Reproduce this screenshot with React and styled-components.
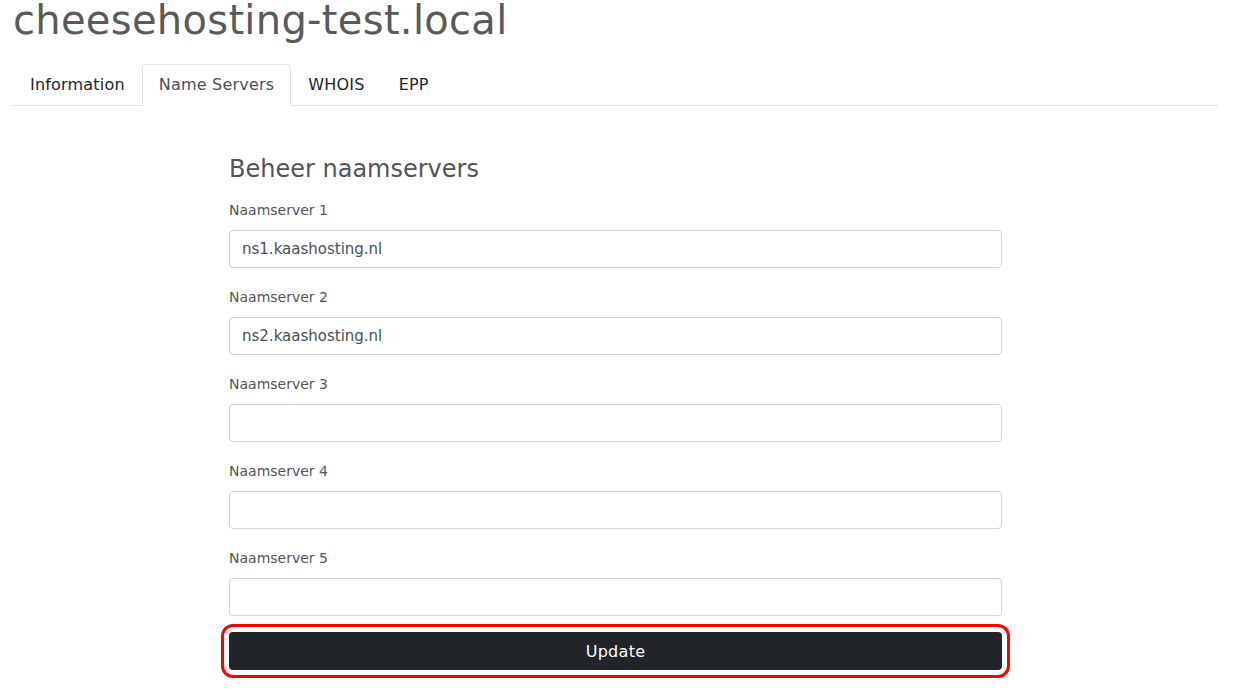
import styled, { createGlobalStyle } from "styled-components";

const GlobalStyle = createGlobalStyle`
  html, body {
    margin: 0;
    padding: 0;
    background: #fff;
  }
  body {
    font-family: "DejaVu Sans", "Open Sans", sans-serif;
    color: #212529;
  }
  * { box-sizing: border-box; }
`;

const tabs = ["Information", "Name Servers", "WHOIS", "EPP"];
const servers = ["ns1.kaashosting.nl", "ns2.kaashosting.nl", "", "", ""];

const Page = styled.div`
  width: 1205px;
  margin-left: 13px;
  padding-bottom: 27px;
`;

const Title = styled.h1`
  margin: 0;
  font-size: 40px;
  font-weight: 400;
  line-height: 40px;
  color: #5a5a5a;
  letter-spacing: 0.3px;
`;

const TabBar = styled.ul`
  display: flex;
  list-style: none;
  margin: 24px 0 0;
  padding: 0;
  border-bottom: 1px solid #dee2e6;
`;

const Tab = styled.li`
  margin-bottom: -1px;
  padding: 8px 16px;
  font-size: 16px;
  letter-spacing: 0.2px;
  line-height: 24px;
  border: 1px solid ${(p) => (p.$active ? "#dee2e6" : "transparent")};
  border-bottom-color: ${(p) => (p.$active ? "#fff" : "transparent")};
  border-radius: 4px 4px 0 0;
  background: ${(p) => (p.$active ? "#fff" : "transparent")};
  color: ${(p) => (p.$active ? "#495057" : "#212529")};
`;

const Form = styled.form`
  width: 773px;
  margin: 49px auto 0;
  display: flex;
  flex-direction: column;
`;

const Heading = styled.h3`
  margin: 0 0 16px;
  font-size: 24px;
  font-weight: 400;
  line-height: 29px;
  color: #555;
`;

const Field = styled.div`
  display: flex;
  flex-direction: column;
  margin-bottom: 19px;
`;

const Label = styled.label`
  font-size: 14px;
  line-height: 21px;
  color: #555;
  margin-bottom: 9px;
`;

const Input = styled.input`
  height: 38px;
  padding: 6px 12px;
  font-family: inherit;
  font-size: 15px;
  color: #495057;
  border: 1px solid #ced4da;
  border-radius: 4px;
  background: #fff;
`;

const Button = styled.button`
  height: 38px;
  margin-top: -3px;
  border: none;
  border-radius: 4px;
  background: #212529;
  color: #fff;
  font-family: inherit;
  font-size: 16px;
  letter-spacing: 0.3px;
  outline: 3px solid #ff0000;
  outline-offset: 5px;
`;

export default function App() {
  return (
    <>
      <GlobalStyle />
      <Page>
        <Title>cheesehosting-test.local</Title>
        <TabBar>
          {tabs.map((t) => (
            <Tab key={t} $active={t === "Name Servers"}>
              {t}
            </Tab>
          ))}
        </TabBar>
        <Form onSubmit={(e) => e.preventDefault()}>
          <Heading>Beheer naamservers</Heading>
          {servers.map((s, i) => (
            <Field key={i}>
              <Label>Naamserver {i + 1}</Label>
              <Input defaultValue={s} />
            </Field>
          ))}
          <Button type="submit">Update</Button>
        </Form>
      </Page>
    </>
  );
}
